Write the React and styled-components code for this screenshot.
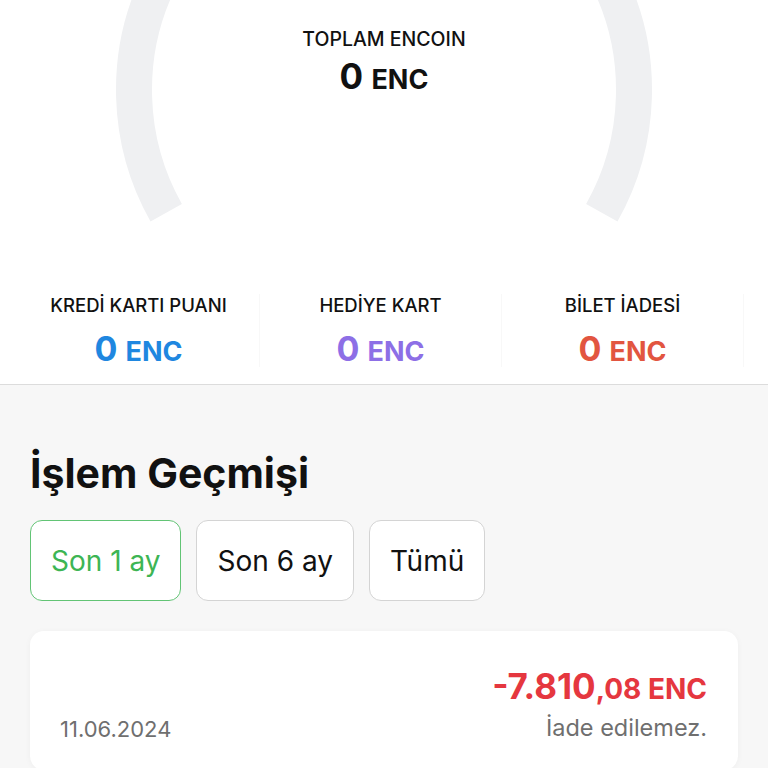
import React from 'react';
import styled, { createGlobalStyle } from 'styled-components';

const COLORS = {
  text: '#111111',
  muted: '#6f6f6f',
  ring: '#eff0f2',
  pageBg: '#f7f7f7',
  line: '#dcdcdc',
  blue: '#1f87e0',
  purple: '#8d6fe6',
  orange: '#e25540',
  red: '#e5373f',
  green: '#3db554',
  greenBorder: '#62c475',
  chipBorder: '#d4d4d4',
};

const GlobalStyle = createGlobalStyle`
  html, body {
    margin: 0;
    padding: 0;
    background: ${COLORS.pageBg};
    font-family: Inter, "Noto Sans", "Liberation Sans", sans-serif;
    color: ${COLORS.text};
  }
`;

const Page = styled.div`
  width: 768px;
  height: 768px;
  overflow: hidden;
  display: flex;
  flex-direction: column;
`;

const TopSection = styled.div`
  background: #fff;
  border-bottom: 1px solid ${COLORS.line};
`;

const Gauge = styled.div`
  position: relative;
  height: 270px;
`;

const GaugeRing = styled.svg`
  position: absolute;
  inset: 0;
`;

const GaugeText = styled.div`
  position: relative;
  display: flex;
  flex-direction: column;
  align-items: center;
  padding-top: 27px;
  gap: 6px;
`;

const GaugeLabel = styled.div`
  font-size: 19.5px;
  font-weight: 500;
`;

const Amount = styled.div`
  font-weight: 700;
  color: ${(p) => p.$color || COLORS.text};
  font-size: ${(p) => p.$big}px;
  line-height: 1.1;
  white-space: nowrap;

  small {
    font-size: ${(p) => p.$small}px;
    font-weight: 700;
  }
`;

const StatsRow = styled.div`
  display: grid;
  grid-template-columns: repeat(3, 242px);
  padding: 24px 0 17px 18px;
`;

const Stat = styled.div`
  display: flex;
  flex-direction: column;
  align-items: center;
  gap: 14px;
  border-right: 1px solid #f8f8f8;
`;

const StatLabel = styled.div`
  font-size: 18.5px;
  font-weight: 500;
`;

const History = styled.div`
  padding: 0 30px;
`;

const Title = styled.h1`
  margin: 68px 0 26px;
  font-size: 41px;
  font-weight: 700;
  line-height: 1;
`;

const Chips = styled.div`
  display: flex;
  gap: 15px;
`;

const Chip = styled.button`
  height: 81px;
  padding: 0 20px;
  border-radius: 12px;
  background: #fff;
  font-family: inherit;
  font-size: 28px;
  font-weight: 400;
  color: ${(p) => (p.$active ? COLORS.green : COLORS.text)};
  border: 1px solid ${(p) => (p.$active ? COLORS.greenBorder : COLORS.chipBorder)};
`;

const Card = styled.div`
  margin-top: 30px;
  background: #fff;
  border-radius: 14px;
  box-shadow: 0 1px 6px rgba(0, 0, 0, 0.04);
  padding: 36px 31px 28px 30px;
  display: flex;
  justify-content: space-between;
  align-items: flex-end;
`;

const DateText = styled.div`
  font-size: 22px;
  color: ${COLORS.muted};
`;

const CardRight = styled.div`
  display: flex;
  flex-direction: column;
  align-items: flex-end;
  gap: 7px;
`;

const Note = styled.div`
  font-size: 23.5px;
  color: ${COLORS.muted};
`;

const stats = [
  { label: 'KREDİ KARTI PUANI', color: COLORS.blue },
  { label: 'HEDİYE KART', color: COLORS.purple },
  { label: 'BİLET İADESİ', color: COLORS.orange },
];

// 240 derece açık halka, alt kısmı boş
const cx = 384;
const cy = 90;
const r = 250;
const a = (29.4 * Math.PI) / 180;
const sx = cx - r * Math.cos(a);
const sy = cy + r * Math.sin(a);
const ex = cx + r * Math.cos(a);
const ringPath = `M ${sx} ${sy} A ${r} ${r} 0 1 1 ${ex} ${sy}`;

export default function App() {
  return (
    <Page>
      <GlobalStyle />
      <TopSection>
        <Gauge>
          <GaugeRing width="768" height="270" viewBox="0 0 768 270">
            <path d={ringPath} fill="none" stroke={COLORS.ring} strokeWidth="36" />
          </GaugeRing>
          <GaugeText>
            <GaugeLabel>TOPLAM ENCOIN</GaugeLabel>
            <Amount $big={35} $small={27}>
              0 <small>ENC</small>
            </Amount>
          </GaugeText>
        </Gauge>
        <StatsRow>
          {stats.map((s) => (
            <Stat key={s.label}>
              <StatLabel>{s.label}</StatLabel>
              <Amount $big={34} $small={27} $color={s.color}>
                0 <small>ENC</small>
              </Amount>
            </Stat>
          ))}
        </StatsRow>
      </TopSection>
      <History>
        <Title>İşlem Geçmişi</Title>
        <Chips>
          <Chip $active>Son 1 ay</Chip>
          <Chip>Son 6 ay</Chip>
          <Chip>Tümü</Chip>
        </Chips>
        <Card>
          <DateText>11.06.2024</DateText>
          <CardRight>
            <Amount $big={35} $small={28} $color={COLORS.red}>
              -7.810<small>,08 ENC</small>
            </Amount>
            <Note>İade edilemez.</Note>
          </CardRight>
        </Card>
      </History>
    </Page>
  );
}
